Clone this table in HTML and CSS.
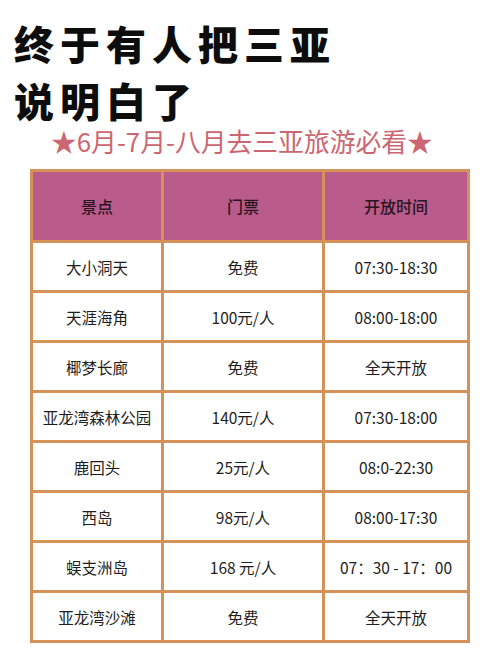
FILE: index.html
```html
<!DOCTYPE html>
<html lang="zh">
<head>
<meta charset="utf-8">
<link rel="stylesheet" href="styles.css">
</head>
<body>
<div class="page">
  <h1 class="title"><span>终于有人把三亚</span><span>说明白了</span></h1>
  <p class="subtitle">★6月-7月-八月去三亚旅游必看★</p>
  <table class="sheet">
    <thead>
      <tr><th class="c1">景点</th><th class="c2">门票</th><th class="c3">开放时间</th></tr>
    </thead>
    <tbody>
      <tr><td>大小洞天</td><td>免费</td><td>07:30-18:30</td></tr>
      <tr><td>天涯海角</td><td>100元/人</td><td>08:00-18:00</td></tr>
      <tr><td>椰梦长廊</td><td>免费</td><td>全天开放</td></tr>
      <tr><td>亚龙湾森林公园</td><td>140元/人</td><td>07:30-18:00</td></tr>
      <tr><td>鹿回头</td><td>25元/人</td><td>08:0-22:30</td></tr>
      <tr><td>西岛</td><td>98元/人</td><td>08:00-17:30</td></tr>
      <tr><td>蜈支洲岛</td><td>168 元/人</td><td>07：30 - 17：00</td></tr>
      <tr><td>亚龙湾沙滩</td><td>免费</td><td>全天开放</td></tr>
    </tbody>
  </table>
</div>
</body>
</html>
```
FILE: styles.css
```css
html, body {
  margin: 0;
  padding: 0;
  background: #ffffff;
}
.page {
  width: 500px;
  height: 654px;
  overflow: hidden;
  font-family: "Noto Sans CJK SC", "Noto Sans", sans-serif;
}
.title {
  margin: 0;
  padding: 15px 0 0 14px;
  font-size: 40px;
  line-height: 57px;
  font-weight: 900;
  letter-spacing: 6px;
  color: #0d0d0d;
  display: flex;
  flex-direction: column;
}
.subtitle {
  margin: -5px 0 0;
  padding-left: 51px;
  font-size: 25.8px;
  line-height: 34px;
  color: #cc6670;
  letter-spacing: 0;
}
.sheet {
  margin: 11px 0 0 30px;
  width: 440px;
  border-collapse: collapse;
  table-layout: fixed;
  border: 3px solid #d49259;
}
.sheet th, .sheet td {
  border: 3px solid #d49259;
  text-align: center;
  vertical-align: middle;
  padding: 0;
  font-size: 15.5px;
  color: #1e1e1e;
}
.sheet th {
  background: #b95b8b;
  height: 68px;
  font-weight: 500;
  font-size: 16px;
  color: #2a1520;
}
.sheet td {
  height: 47px;
  font-weight: 400;
}
.c1 { width: 128px; }
.c2 { width: 158px; }
.c3 { width: auto; }
```
